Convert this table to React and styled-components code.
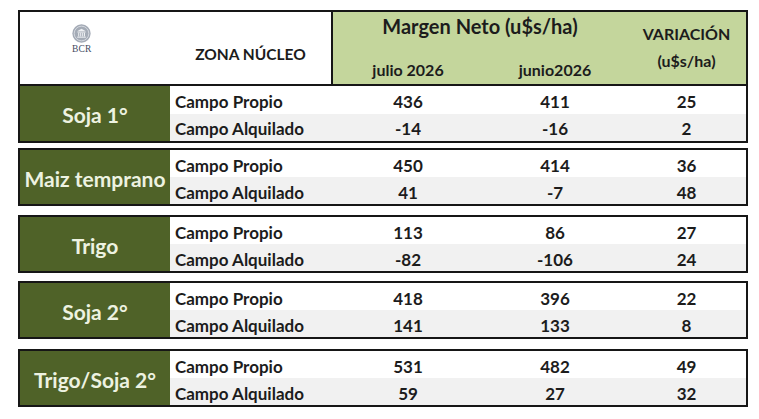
import React from "react"
import styled, { createGlobalStyle } from "styled-components"

const GlobalStyle = createGlobalStyle`
  * { box-sizing: border-box; }
  body {
    margin: 0;
    background: #ffffff;
    font-family: "Lato", "Open Sans", sans-serif;
    color: #1c1c1c;
  }
`

const crops = [
  { name: "Soja 1°", rows: [["436", "411", "25"], ["-14", "-16", "2"]] },
  { name: "Maiz temprano", rows: [["450", "414", "36"], ["41", "-7", "48"]] },
  { name: "Trigo", rows: [["113", "86", "27"], ["-82", "-106", "24"]] },
  { name: "Soja 2°", rows: [["418", "396", "22"], ["141", "133", "8"]] },
  { name: "Trigo/Soja 2°", rows: [["531", "482", "49"], ["59", "27", "32"]] },
]

const gaps = [0, 5, 9, 8, 10]

const Logo = () => (
  <LogoWrap>
    <svg width="19" height="19" viewBox="0 0 26 26">
      <circle cx="13" cy="13" r="12.5" fill="#a4abb6" />
      <circle cx="13" cy="13" r="10" fill="none" stroke="#e4e7ec" strokeWidth="1" />
      <path d="M7 10 L13 6.5 L19 10 Z" fill="#eef0f3" />
      <rect x="7.5" y="10.5" width="11" height="1.2" fill="#eef0f3" />
      <rect x="8.5" y="12" width="1.4" height="5" fill="#eef0f3" />
      <rect x="11.2" y="12" width="1.4" height="5" fill="#eef0f3" />
      <rect x="13.9" y="12" width="1.4" height="5" fill="#eef0f3" />
      <rect x="16.4" y="12" width="1.4" height="5" fill="#eef0f3" />
      <rect x="7" y="17.3" width="12" height="1.4" fill="#eef0f3" />
    </svg>
    <LogoText>BCR</LogoText>
  </LogoWrap>
)

const App = () => (
  <>
    <GlobalStyle />
    <Page>
      <Table>
        <Header>
          <LogoCell>
            <Logo />
          </LogoCell>
          <ZoneCell>ZONA NÚCLEO</ZoneCell>
          <HeadGreen>
            <MarginTitle>Margen Neto (u$s/ha)</MarginTitle>
            <VarTitle>
              <span>VARIACIÓN</span>
              <span>(u$s/ha)</span>
            </VarTitle>
            <Month>julio 2026</Month>
            <Month>junio2026</Month>
          </HeadGreen>
        </Header>
        {crops.map((crop, i) => (
          <Group key={crop.name} $gap={gaps[i]} $first={i === 0}>
            <CropCell>{crop.name}</CropCell>
            <Rows>
              {crop.rows.map((vals, j) => (
                <Row key={j} $alt={j === 1}>
                  <Label>{j === 0 ? "Campo Propio" : "Campo Alquilado"}</Label>
                  {vals.map((v, k) => (
                    <Num key={k}>{v}</Num>
                  ))}
                </Row>
              ))}
            </Rows>
          </Group>
        ))}
      </Table>
    </Page>
  </>
)

const Page = styled.div`
  padding: 10px 0 0 18px;
`

const Table = styled.div`
  width: 730px;
  display: flex;
  flex-direction: column;
`

const Header = styled.div`
  height: 76px;
  border: 2px solid #161616;
  display: grid;
  grid-template-columns: 150px 163px 1fr;
  background: #ffffff;
`

const LogoCell = styled.div`
  display: flex;
  justify-content: flex-start;
  padding: 12px 0 0 52px;
`

const LogoWrap = styled.div`
  display: flex;
  flex-direction: column;
  align-items: center;
  gap: 1px;
`

const LogoText = styled.span`
  font-family: "Liberation Serif", serif;
  font-size: 9.5px;
  color: #3f4a62;
  letter-spacing: 0.2px;
`

const ZoneCell = styled.div`
  display: flex;
  align-items: center;
  justify-content: center;
  padding-top: 12px;
  font-size: 15.5px;
  font-weight: 700;
  border-right: 2px solid #161616;
`

const HeadGreen = styled.div`
  background: #c4d69c;
  display: grid;
  grid-template-columns: 150px 144px 1fr;
  grid-template-rows: 28px 1fr;
  font-weight: 700;
`

const MarginTitle = styled.div`
  grid-column: 1 / 3;
  display: flex;
  align-items: center;
  justify-content: center;
  font-size: 20px;
`

const VarTitle = styled.div`
  grid-column: 3;
  grid-row: 1 / 3;
  display: flex;
  flex-direction: column;
  align-items: center;
  justify-content: center;
  gap: 8px;
  font-size: 16px;
  padding-bottom: 2px;
`

const Month = styled.div`
  display: flex;
  align-items: center;
  justify-content: center;
  font-size: 16px;
  padding-top: 14px;
`

const Group = styled.div`
  margin-top: ${(p) => p.$gap}px;
  height: ${(p) => (p.$first ? 57 : 58)}px;
  border: 2px solid #161616;
  border-top-width: ${(p) => (p.$first ? 0 : 2)}px;
  display: grid;
  grid-template-columns: 150px 1fr;
`

const CropCell = styled.div`
  background: #4f6228;
  color: #edf2e1;
  font-size: 21px;
  font-weight: 700;
  display: flex;
  align-items: center;
  justify-content: center;
  white-space: nowrap;
  padding-top: 2px;
`

const Rows = styled.div`
  display: grid;
  grid-template-rows: 1fr 1fr;
`

const Row = styled.div`
  display: grid;
  grid-template-columns: 163px 150px 144px 1fr;
  align-items: center;
  padding-top: 3px;
  background: ${(p) => (p.$alt ? "#f1f1f1" : "#ffffff")};
  font-size: 17px;
  font-weight: 700;
`

const Label = styled.div`
  padding-left: 5px;
  white-space: nowrap;
`

const Num = styled.div`
  text-align: center;
`

export default App
